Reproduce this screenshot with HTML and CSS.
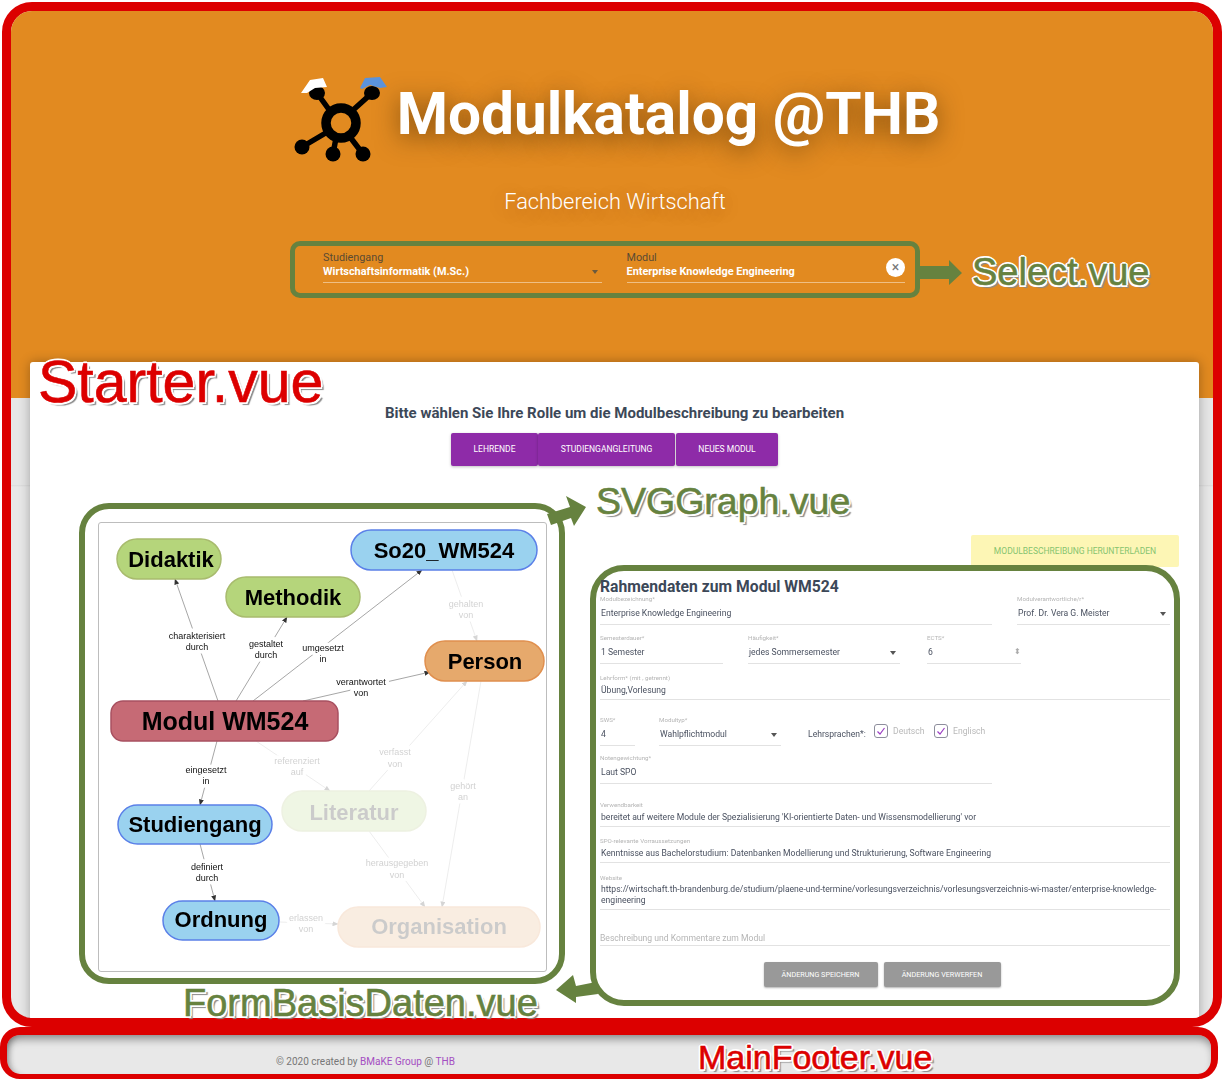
FILE: index.html
```html
<!DOCTYPE html>
<html lang="de">
<head>
<meta charset="utf-8">
<title>Modulkatalog @THB</title>
<link rel="stylesheet" href="styles.css">
</head>
<body>
<div class="page">
  <section class="app">
    <header class="hero">
      <div class="brand">
        <svg class="logo" width="96" height="90" viewBox="0 0 96 90">
          <g stroke="#000" fill="none">
            <circle cx="48" cy="47" r="15" stroke-width="9.5"/>
            <path d="M24 17 37 35M79 17 59 35M9 71 36 55M40 78 43 62M70 78 57 61" stroke-width="5.5"/>
          </g>
          <g fill="#000">
            <ellipse cx="24" cy="17" rx="8" ry="7"/>
            <ellipse cx="79" cy="17" rx="8" ry="7"/>
            <circle cx="9" cy="71" r="7.5"/>
            <circle cx="40" cy="78" r="7.5"/>
            <circle cx="70" cy="78" r="7.5"/>
          </g>
          <path d="M8 17 17 4 30 2 34 11 22 12 14 17Z" fill="#fff"/>
          <path d="M67 12 72 2 87 1 94 11 87 12 77 9 69 13Z" fill="#5b93dc"/>
        </svg>
        <h1 class="title">Modulkatalog @THB</h1>
      </div>
      <p class="subtitle">Fachbereich Wirtschaft</p>
      <div class="select-box">
        <div class="select-field">
          <span class="select-label">Studiengang</span>
          <span class="select-value">Wirtschaftsinformatik (M.Sc.)</span>
          <span class="caret select-caret"></span>
        </div>
        <div class="select-field">
          <span class="select-label">Modul</span>
          <span class="select-value">Enterprise Knowledge Engineering</span>
          <span class="clear">×</span>
        </div>
      </div>
    </header>

    <main class="card">
      <div class="roles">
        <h2 class="roles-title">Bitte wählen Sie Ihre Rolle um die Modulbeschreibung zu bearbeiten</h2>
        <div class="role-buttons">
          <button class="role-btn role-a">Lehrende</button>
          <button class="role-btn role-b">Studiengangleitung</button>
          <button class="role-btn role-c">Neues Modul</button>
        </div>
      </div>

      <div class="workspace">
        <div class="graph-frame">
          <svg class="graph" width="449" height="450" viewBox="99 523 447 448">
            <defs>
              <marker id="arr" markerWidth="6" markerHeight="5" refX="5.5" refY="2.5" orient="auto" markerUnits="userSpaceOnUse">
                <path d="M0 0 6 2.5 0 5Z" fill="#333"/>
              </marker>
            </defs>
            <g class="edges">
              <line x1="218" y1="701" x2="175" y2="579" marker-end="url(#arr)"/>
              <line x1="236" y1="701" x2="287" y2="617" marker-end="url(#arr)"/>
              <line x1="253" y1="701" x2="422" y2="570" marker-end="url(#arr)"/>
              <line x1="303" y1="701" x2="430" y2="672" marker-end="url(#arr)"/>
              <line x1="217" y1="741" x2="200" y2="805" marker-end="url(#arr)"/>
              <line x1="200" y1="844" x2="215" y2="901" marker-end="url(#arr)"/>
            </g>
            <g class="dim">
              <g class="edges">
                <line x1="279" y1="922" x2="338" y2="924" marker-end="url(#arr)"/>
                <line x1="452" y1="570" x2="477" y2="641" marker-end="url(#arr)"/>
                <line x1="256" y1="741" x2="330" y2="791" marker-end="url(#arr)"/>
                <line x1="369" y1="791" x2="467" y2="681" marker-end="url(#arr)"/>
                <line x1="369" y1="831" x2="425" y2="907" marker-end="url(#arr)"/>
                <line x1="481" y1="681" x2="442" y2="907" marker-end="url(#arr)"/>
              </g>
              <g class="edge-labels">
                <text x="306" y="921">erlassen</text><text x="306" y="932">von</text>
                <text x="466" y="607">gehalten</text><text x="466" y="618">von</text>
                <text x="297" y="764">referenziert</text><text x="297" y="775">auf</text>
                <text x="395" y="755">verfasst</text><text x="395" y="767">von</text>
                <text x="397" y="866">herausgegeben</text><text x="397" y="878">von</text>
                <text x="463" y="789">gehört</text><text x="463" y="800">an</text>
              </g>
              <rect class="n-green" x="282" y="791" width="144" height="40" rx="20"/>
              <text class="n-text" x="354" y="820">Literatur</text>
              <rect class="n-orange" x="338" y="907" width="202" height="40" rx="20"/>
              <text class="n-text" x="439" y="934">Organisation</text>
            </g>
            <g class="edge-labels">
              <text x="197" y="639">charakterisiert</text><text x="197" y="650">durch</text>
              <text x="266" y="647">gestaltet</text><text x="266" y="658">durch</text>
              <text x="323" y="651">umgesetzt</text><text x="323" y="662">in</text>
              <text x="361" y="685">verantwortet</text><text x="361" y="696">von</text>
              <text x="206" y="773">eingesetzt</text><text x="206" y="784">in</text>
              <text x="207" y="870">definiert</text><text x="207" y="881">durch</text>
            </g>
            <rect class="n-green" x="117" y="539" width="104" height="40" rx="20"/>
            <text class="n-text" x="171" y="567">Didaktik</text>
            <rect class="n-green" x="226" y="577" width="134" height="40" rx="20"/>
            <text class="n-text" x="293" y="605">Methodik</text>
            <rect class="n-blue" x="351" y="530" width="186" height="40" rx="20"/>
            <text class="n-text" x="444" y="558">So20_WM524</text>
            <rect class="n-orange" x="425" y="641" width="119" height="40" rx="20"/>
            <text class="n-text" x="485" y="669">Person</text>
            <rect class="n-red" x="111" y="701" width="227" height="40" rx="12"/>
            <text class="n-text n-large" x="225" y="730">Modul WM524</text>
            <rect class="n-blue" x="118" y="805" width="154" height="39" rx="19.5"/>
            <text class="n-text" x="195" y="832">Studiengang</text>
            <rect class="n-blue" x="163" y="901" width="116" height="39" rx="19.5"/>
            <text class="n-text" x="221" y="927">Ordnung</text>
          </svg>
        </div>

        <div class="form-col">
          <button class="download">Modulbeschreibung herunterladen</button>
          <form class="form-frame">
            <h3 class="form-title">Rahmendaten zum Modul WM524</h3>
            <div class="rows">
              <div class="row r1">
                <div class="field w392"><span class="lbl">Modulbezeichnung*</span><span class="val">Enterprise Knowledge Engineering</span></div>
                <div class="field w153 s1"><span class="lbl">Modulverantwortliche/r*</span><span class="val">Prof. Dr. Vera G. Meister</span><span class="caret"></span></div>
              </div>
              <div class="row r2">
                <div class="field w123"><span class="lbl">Semesterdauer*</span><span class="val">1 Semester</span></div>
                <div class="field w152 s2"><span class="lbl">Häufigkeit*</span><span class="val">jedes Sommersemester</span><span class="caret"></span></div>
                <div class="field w94 s3"><span class="lbl">ECTS*</span><span class="val">6</span><span class="spin">⬍</span></div>
              </div>
              <div class="row r3">
                <div class="field tight grow"><span class="lbl">Lehrform* (mit , getrennt)</span><span class="val">Übung,Vorlesung</span></div>
              </div>
              <div class="row r4">
                <div class="field w35"><span class="lbl">SWS*</span><span class="val">4</span></div>
                <div class="field w122 s4"><span class="lbl">Modultyp*</span><span class="val">Wahlpflichtmodul</span><span class="caret"></span></div>
                <div class="langs">
                  <span class="langs-label">Lehrsprachen*:</span>
                  <span class="check"><svg width="10" height="10" viewBox="0 0 10 10"><path d="M1.5 5.5 4 8 8.5 2" fill="none" stroke="#9c3fc4" stroke-width="1.2"/></svg></span>
                  <span class="lang">Deutsch</span>
                  <span class="check"><svg width="10" height="10" viewBox="0 0 10 10"><path d="M1.5 5.5 4 8 8.5 2" fill="none" stroke="#9c3fc4" stroke-width="1.2"/></svg></span>
                  <span class="lang">Englisch</span>
                </div>
              </div>
              <div class="row r5">
                <div class="field w392"><span class="lbl">Notengewichtung*</span><span class="val">Laut SPO</span></div>
              </div>
              <div class="row r6">
                <div class="field tight grow"><span class="lbl">Verwendbarkeit</span><span class="val">bereitet auf weitere Module der Spezialisierung 'KI-orientierte Daten- und Wissensmodellierung' vor</span></div>
              </div>
              <div class="row r7">
                <div class="field tight grow"><span class="lbl">SPO-relevante Vorraussetzungen</span><span class="val">Kenntnisse aus Bachelorstudium: Datenbanken Modellierung und Strukturierung, Software Engineering</span></div>
              </div>
              <div class="row r8">
                <div class="field tight grow"><span class="lbl">Website</span><span class="val multi">https://wirtschaft.th-brandenburg.de/studium/plaene-und-termine/vorlesungsverzeichnis/vorlesungsverzeichnis-wi-master/enterprise-knowledge-engineering</span></div>
              </div>
              <div class="row r9">
                <div class="field place grow"><span class="val placeholder">Beschreibung und Kommentare zum Modul</span></div>
              </div>
            </div>
            <div class="form-actions">
              <button class="gray-btn btn-save">Änderung speichern</button>
              <button class="gray-btn btn-drop">Änderung verwerfen</button>
            </div>
          </form>
        </div>
      </div>
    </main>
  </section>

  <footer class="footer">© 2020 created by <span class="link">BMaKE Group</span> @ <span class="link">THB</span></footer>

  <span class="tag tag-green tag-select">Select.vue</span>
  <span class="tag tag-red tag-starter">Starter.vue</span>
  <span class="tag tag-green tag-graph">SVGGraph.vue</span>
  <span class="tag tag-green tag-form">FormBasisDaten.vue</span>
  <span class="tag tag-red tag-footer">MainFooter.vue</span>

  <svg class="arrows" width="1224" height="1080" viewBox="0 0 1224 1080">
    <path d="M920 264H949V258L962 271 949 283V277H920Z"/>
    <path d="M547 512 570 505 566 494 586 505 574 524 571 516 551 523Z"/>
    <path d="M596 980 576 984 573 973 556 988 576 1001 576 995 598 992Z"/>
  </svg>
</div>
</body>
</html>
```
FILE: styles.css
```css
* { box-sizing: border-box; }
html, body { margin: 0; padding: 0; background: #fff; overflow: hidden; }
body { font-family: Roboto, "Liberation Sans", sans-serif; }
.page { position: relative; width: 1224px; height: 1080px; }
button { font-family: inherit; border: 0; cursor: pointer; }

/* Starter frame */
.app {
  width: 1220px; height: 1025px; margin: 2px 2px 0;
  border: 9px solid #dc0000; border-radius: 30px; overflow: hidden;
  background: linear-gradient(#e6e6e6 474px, #dadada 474px, #e8e8e8 476px);
}
.hero {
  height: 387px; background: #e28a20; padding-top: 65px;
  display: flex; flex-direction: column; align-items: center;
}
.brand { display: flex; align-items: flex-start; height: 87px; margin-left: 9px; }
.logo { flex: none; margin: 0 8px 0 0; }
.title {
  margin: 5px 0 0; font-size: 58.6px; line-height: 66px; font-weight: 700; color: #fff; white-space: nowrap;
  text-shadow: 0 6px 24px rgba(60, 35, 0, .6);
}
.subtitle {
  margin: 26px 0 0 6px; font-size: 21.8px; line-height: 25px; font-weight: 300; color: #fff;
  text-shadow: 0 4px 20px rgba(90, 50, 0, .3);
}
.select-box {
  width: 630px; height: 57px; margin: 27px 0 0 -14px;
  border: 5px solid #66823f; border-radius: 10px;
  display: flex; gap: 25px; padding: 0 10px 0 28px;
}
.select-field {
  position: relative; flex: 1; height: 33px; margin-top: 4px;
  border-bottom: 1px solid rgba(255, 255, 255, .45);
  display: flex; flex-direction: column;
}
.select-label { font-size: 10.8px; line-height: 13px; margin-top: 1px; color: #5a4a33; }
.select-value { font-size: 10.9px; line-height: 14px; margin-top: 1px; font-weight: 700; color: #fff; white-space: nowrap; }
.caret {
  position: absolute; right: 4px; bottom: 8px; width: 0; height: 0;
  border: 3.5px solid transparent; border-top: 4px solid #555; border-bottom: 0;
}
.select-caret { bottom: 8px; border-top-color: #6b5a3e; }
.clear {
  position: absolute; right: 0; top: 8px; width: 19px; height: 19px; border-radius: 50%;
  background: #fff; color: #777; font-size: 14px; line-height: 19px; text-align: center;
}

/* Card */
.card {
  width: 1169px; height: 660px; margin: -36px 0 0 19px; background: #fff; border-radius: 3px;
  box-shadow: 0 0 12px rgba(0, 0, 0, .3);
  padding-top: 41px; position: relative;
}
.roles { display: flex; flex-direction: column; align-items: center; height: 100px; }
.roles-title { margin: 0; font-size: 15px; line-height: 20px; font-weight: 700; color: #3c4858; }
.role-buttons { display: flex; margin-top: 10px; gap: 0; }
.role-btn {
  height: 33px; padding-bottom: 2px; background: #8e2ba8; color: #fff; font-size: 8.5px; text-transform: uppercase;
  border-radius: 2px; box-shadow: 0 1px 3px rgba(0, 0, 0, .25);
}
.role-a { width: 87px; }
.role-b { width: 137px; margin-right: 1px; }
.role-c { width: 102px; }

.workspace { display: flex; gap: 25px; padding-left: 49px; margin-top: 0; }
.graph-frame {
  flex: none; width: 486px; height: 481px; border: 6px solid #66823f; border-radius: 30px;
  padding: 13px 12px 13px 13px;
}
.graph { display: block; border: 1px solid #bdbdbd; border-radius: 3px; background: #fff; filter: blur(.35px); }
.edges line { stroke: #808080; stroke-width: .7; }
.edge-labels text {
  font-family: "Liberation Sans", sans-serif; font-size: 9px; text-anchor: middle; fill: #111;
  stroke: #fff; stroke-width: 7px; paint-order: stroke fill; stroke-linejoin: round;
}
.n-text { font-family: "Liberation Sans", sans-serif; font-weight: 700; font-size: 22px; text-anchor: middle; fill: #000; }
.n-large { font-size: 25px; }
.dim { opacity: .2; }
.n-green { fill: #b5d57b; stroke: #a8bb6e; stroke-width: 1.5; }
.n-blue { fill: #9ad2ef; stroke: #5b80e8; stroke-width: 1.5; }
.n-orange { fill: #e6a96c; stroke: #e08f4e; stroke-width: 1.5; }
.n-red { fill: #c66a75; stroke: #a85060; stroke-width: 1.5; }

.form-col { flex: none; width: 590px; padding-top: 32px; display: flex; flex-direction: column; align-items: flex-end; }
.download {
  width: 208px; height: 32px; margin-right: 1px; background: #fdf6b5; color: #86c46f; font-size: 8.5px; text-transform: uppercase;
  border-radius: 2px;
}
.form-frame {
  position: relative; width: 590px; height: 441px; margin-top: -2px; padding: 5px 4px 0;
  border: 6px solid #66823f; border-radius: 34px; background: transparent;
}
.form-title { margin: 0; font-size: 15.7px; line-height: 22px; font-weight: 700; color: #3c4858; }
.rows { display: flex; flex-direction: column; filter: blur(.3px); }
.row { display: flex; align-items: flex-end; }
.r1 { height: 27px; }
.r2 { height: 39px; }
.r3 { height: 36px; }
.r4 { height: 46px; }
.r5 { height: 38px; }
.r6 { height: 43px; }
.r7 { height: 36px; }
.r8 { height: 47px; }
.r9 { height: 36px; }
.field {
  position: relative; display: flex; flex-direction: column; border-bottom: 1px solid #e2e2e2; padding-bottom: 5px;
}
.field .lbl { margin-bottom: 4.5px; }
.tight { padding-bottom: 3px; }
.field.tight .lbl { margin-bottom: 2.5px; }
.place { padding-bottom: 1px; }
.lbl { font-size: 6.2px; line-height: 8px; color: #b5b5b5; white-space: nowrap; }
.val { font-size: 8.6px; line-height: 12px; color: #4a5160; padding-left: 1px; white-space: nowrap; }
.multi { white-space: normal; line-height: 11px; }
.placeholder { padding-left: 0; color: #b5b5b5; }
.grow { flex: 1; }
.w392 { width: 392px; }
.w153 { width: 153px; }
.w123 { width: 123px; }
.w152 { width: 152px; }
.w94 { width: 94px; }
.w35 { width: 35px; }
.w122 { width: 122px; }
.s1 { margin-left: 25px; }
.s2 { margin-left: 25px; }
.s3 { margin-left: 27px; }
.s4 { margin-left: 24px; }
.field .caret { bottom: 8px; }
.spin { position: absolute; right: 0; bottom: 5px; font-size: 8px; line-height: 12px; color: #aaa; }
.langs { display: flex; align-items: center; height: 14px; margin: 0 0 8px 27px; }
.langs-label { font-size: 8.6px; color: #4a5160; width: 66px; margin-top: 6px; }
.check {
  width: 14px; height: 14px; border: 1.5px solid #8d8d9c; border-radius: 3px;
  display: flex; align-items: center; justify-content: center; margin-right: 5px;
}
.lang { font-size: 8.6px; color: #b9b9b9; width: 41px; margin-top: -1px; }
.form-actions { display: flex; justify-content: center; gap: 6px; margin: 16px 0 0 -6px; }
.gray-btn {
  height: 25px; background: #999; color: #fff; font-size: 7.2px; text-transform: uppercase; border-radius: 2px;
  box-shadow: 0 1px 2px rgba(0, 0, 0, .3);
}
.btn-save { width: 114px; }
.btn-drop { width: 117px; }

/* Footer */
.footer {
  width: 1218px; height: 52px; margin-top: 0;
  border: 7px solid #dc0000; border-top-width: 8px; border-bottom-width: 5px; border-radius: 20px;
  background: #e8e8e8;
  box-shadow: inset 0 7px 8px -3px rgba(0, 0, 0, .4), inset 7px 0 6px -5px rgba(0, 0, 0, .3);
  padding: 20px 0 0 269px; font-size: 10px; line-height: 14px; color: #777;
}
.link { color: #a44ec2; }

/* Annotations */
.tag {
  position: absolute; font-family: "Liberation Sans", sans-serif; white-space: nowrap;
  -webkit-text-stroke: .6px currentColor;
  text-shadow:
    -1.5px -1.5px 0 #fff, 1.5px -1.5px 0 #fff, -1.5px 1.5px 0 #fff, 1.5px 1.5px 0 #fff,
    0 -2px 0 #fff, 0 2px 0 #fff, -2px 0 0 #fff, 2px 0 0 #fff,
    3px 3px 1px #8a8a8a;
}
.tag-green { color: #66823f; }
.tag-red { color: #dc0000; }
.tag-select { left: 972px; top: 248px; font-size: 38px; line-height: 44px; }
.tag-starter { left: 38px; top: 346px; font-size: 59px; line-height: 68px; }
.tag-graph { left: 596px; top: 477px; font-size: 37.5px; line-height: 44px; }
.tag-form { left: 183px; top: 979px; font-size: 38px; line-height: 44px; }
.tag-footer { left: 698px; top: 1035px; font-size: 34px; line-height: 40px; }
.arrows { position: absolute; left: 0; top: 0; pointer-events: none; }
.arrows path { fill: #66823f; }
```
